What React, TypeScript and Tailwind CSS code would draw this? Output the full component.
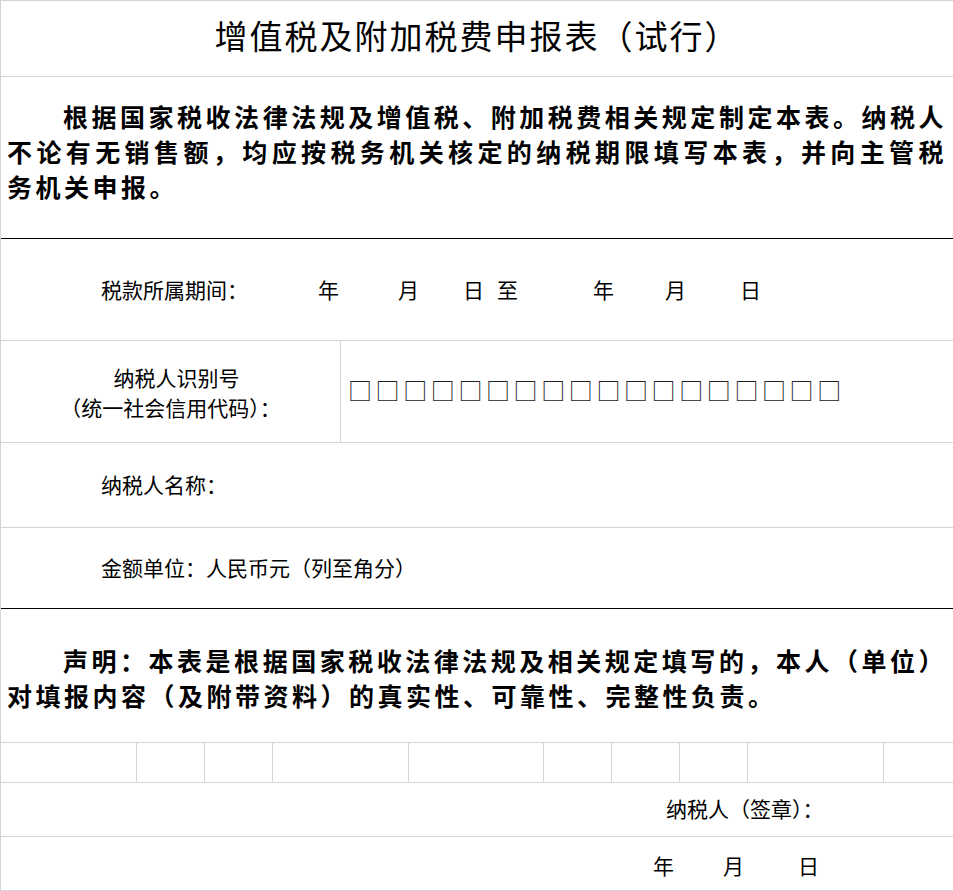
export default function App() {
  const f = { fontFamily: '"Noto Sans CJK SC", "Noto Sans", sans-serif' };
  const cols = [136, 68, 68, 136, 136, 68, 68, 68, 136, 69];
  return (
    <div className="w-[953px] h-[891px] bg-white text-black border-l border-t border-[#d4d4d4] overflow-hidden" style={f}>
      <div className="h-[76px] border-b border-[#d4d4d4] flex items-center justify-center text-[33px] tracking-[2px] pb-[6px]">增值税及附加税费申报表（试行）</div>
      <div className="h-[162px] border-b border-black px-[6px] pt-[22px] text-[25px] font-bold leading-[35px] text-justify tracking-[3.5px]">
        <span className="inline-block w-[56px]"></span>根据国家税收法律法规及增值税、附加税费相关规定制定本表。纳税人不论有无销售额，均应按税务机关核定的纳税期限填写本表，并向主管税务机关申报。
      </div>
      <div className="h-[102px] border-b border-[#d4d4d4] flex items-center text-[21px] pl-[100px]">
        <span className="w-[217px]">税款所属期间：</span>
        <span className="w-[80px]">年</span>
        <span className="w-[65px]">月</span>
        <span className="w-[34px]">日</span>
        <span className="w-[96px]">至</span>
        <span className="w-[72px]">年</span>
        <span className="w-[75px]">月</span>
        <span>日</span>
      </div>
      <div className="h-[102px] border-b border-[#d4d4d4] flex text-[21px]">
        <div className="w-[340px] border-r border-[#d4d4d4] flex flex-col items-center justify-center leading-[30px]">
          <span className="pl-[12px]">纳税人识别号</span>
          <span>（统一社会信用代码）：</span>
        </div>
        <div className="flex items-center pl-[7px] pb-[4px] text-[24px] tracking-[3.6px] text-[#222]">□□□□□□□□□□□□□□□□□□</div>
      </div>
      <div className="h-[85px] border-b border-[#d4d4d4] flex items-center text-[21px] pl-[100px]">纳税人名称：</div>
      <div className="h-[81px] border-b border-black flex items-center text-[21px] pl-[100px]">金额单位：人民币元（列至角分）</div>
      <div className="h-[134px] border-b border-[#d4d4d4] px-[6px] pt-[34px] text-[25px] font-bold leading-[35px] text-justify tracking-[3.5px]">
        <span className="inline-block w-[56px]"></span>声明：本表是根据国家税收法律法规及相关规定填写的，本人（单位）对填报内容（及附带资料）的真实性、可靠性、完整性负责。
      </div>
      <div className="h-[40px] border-b border-[#d4d4d4] flex">
        {cols.map((w, i) => (
          <div key={i} className={i < cols.length - 1 ? "border-r border-[#d4d4d4]" : ""} style={{ width: w }} />
        ))}
      </div>
      <div className="h-[54px] border-b border-[#d4d4d4] flex items-center text-[21px] pl-[665px] pb-[2px]">纳税人（签章）：</div>
      <div className="h-[54px] border-b border-[#d4d4d4] flex items-center text-[21px] pl-[652px] pt-[4px]">
        <span className="w-[70px]">年</span>
        <span className="w-[75px]">月</span>
        <span>日</span>
      </div>
    </div>
  );
}
